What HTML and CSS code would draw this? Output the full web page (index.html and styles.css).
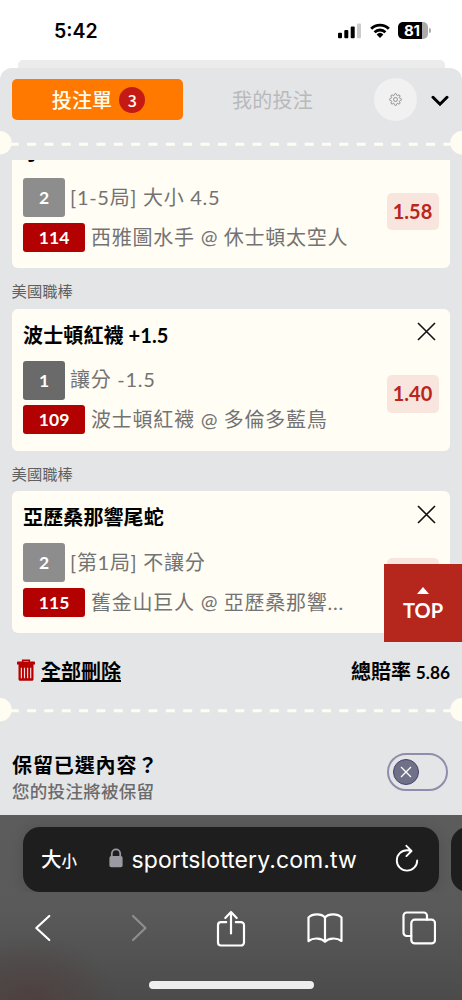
FILE: index.html
```
<!DOCTYPE html>
<html lang="zh-Hant">
<head>
<meta charset="utf-8">
<title>投注單</title>
<link rel="stylesheet" href="styles.css">
</head>
<body>
<div class="phone">
  <header class="status">
    <span class="clock">5:42</span>
    <div class="status-icons">
      <svg class="signal" width="24" height="16" viewBox="0 0 24 16"><rect x="0" y="9.7" width="4" height="5.6" rx="1"/><rect x="6.3" y="7" width="4" height="8.3" rx="1"/><rect x="12.7" y="3.4" width="4" height="11.9" rx="1"/><rect x="19" y="0.5" width="4" height="14.8" rx="1" fill="#cbcbcb"/></svg>
      <svg class="wifi" width="20" height="16" viewBox="0 0 20 16"><path d="M1.2 5.7a12.6 12.6 0 0 1 17.6 0M4.6 9.2a7.8 7.8 0 0 1 10.8 0" fill="none" stroke="#000" stroke-width="2.9"/><path d="M6.6 11.4a5 5 0 0 1 6.8 0L10 15z"/></svg>
      <div class="battery"><span>81</span></div>
      <i class="battery-cap"></i>
    </div>
  </header>
  <div class="sheet-back"></div>
  <main class="sheet">
    <nav class="tabs">
      <div class="tab active">投注單<span class="count">3</span></div>
      <div class="tab idle">我的投注</div>
      <div class="gear"><svg width="13" height="13" viewBox="0 0 24 24" fill="none" stroke="#858585" stroke-width="1.7"><circle cx="12" cy="12" r="3.6"/><path d="M19.400 15a1.650 1.650 0 0 0 .33 1.820l.06.06a2 2 0 0 1-2.830 2.830l-.06-.06a1.650 1.650 0 0 0-2.800 1.170V21a2 2 0 0 1-4 0v-.09a1.650 1.650 0 0 0-2.900-1.200l-.06.06a2 2 0 0 1-2.830-2.830l.06-.06A1.650 1.650 0 0 0 3.090 14H3a2 2 0 0 1 0-4h.09a1.650 1.650 0 0 0 1.200-2.900l-.06-.06a2 2 0 0 1 2.830-2.830l.06.06A1.650 1.650 0 0 0 10 3.090V3a2 2 0 0 1 4 0v.09a1.650 1.650 0 0 0 2.820 1.180l.06-.06a2 2 0 0 1 2.830 2.830l-.06.06A1.650 1.650 0 0 0 20.910 10H21a2 2 0 0 1 0 4h-.09a1.650 1.650 0 0 0-1.510 1z"/></svg></div>
      <svg class="chevron" width="18" height="12" viewBox="0 0 18 12"><path d="M2 2.3l7 6.9 7-6.9" fill="none" stroke="#000" stroke-width="3" stroke-linecap="round"/></svg>
    </nav>
    <svg class="tear" width="462" height="24" viewBox="0 0 462 24"><path d="M9.7 13.300H452" stroke="#fffdf2" stroke-width="3" stroke-dasharray="9 8.35"/><circle cx="0" cy="11.7" r="11.7"/><circle cx="462" cy="11.7" r="11.7"/></svg>
    <section class="bets">
      <article class="card">
        <div class="info">
          <h2>小 4.5</h2>
          <div class="line"><b class="pick gray">2</b><span>[1-5局] 大小 4.5</span></div>
          <div class="line game"><b class="code">114</b><span>西雅圖水手 <i class="at">@</i> 休士頓太空人</span></div>
        </div>
        <div class="side"><svg class="close" width="19" height="19" viewBox="0 0 19 19"><path d="M1 1l17 17M18 1L1 18"/></svg><b class="odds">1.58</b></div>
      </article>
      <div class="league">美國職棒</div>
      <article class="card">
        <div class="info">
          <h2>波士頓紅襪 +1.5</h2>
          <div class="line"><b class="pick">1</b><span>讓分 -1.5</span></div>
          <div class="line game"><b class="code">109</b><span>波士頓紅襪 <i class="at">@</i> 多倫多藍鳥</span></div>
        </div>
        <div class="side"><svg class="close" width="19" height="19" viewBox="0 0 19 19"><path d="M1 1l17 17M18 1L1 18"/></svg><b class="odds">1.40</b></div>
      </article>
      <div class="league">美國職棒</div>
      <article class="card">
        <div class="info">
          <h2>亞歷桑那響尾蛇</h2>
          <div class="line"><b class="pick gray">2</b><span>[第1局] 不讓分</span></div>
          <div class="line game"><b class="code">115</b><span>舊金山巨人 <i class="at">@</i> 亞歷桑那響...</span></div>
        </div>
        <div class="side"><svg class="close" width="19" height="19" viewBox="0 0 19 19"><path d="M1 1l17 17M18 1L1 18"/></svg><b class="odds">&nbsp;</b></div>
      </article>
    </section>
    <div class="summary">
      <div class="clear"><svg width="18" height="22" viewBox="0 0 18 22"><path d="M5.7 3V1.2h6.6V3" fill="none" stroke="#b80000" stroke-width="1.6"/><path d="M.8 2.6h16.4c.5 0 .8.4.8.8V5.6H0V3.4c0-.4.3-.8.8-.8zM1.5 5.6h15v14.600c0 .9-.6 1.5-1.5 1.5H3c-.9 0-1.5-.6-1.5-1.5z" fill="#b80000"/><path d="M4.4 8.7v10.5M7.5 8.7v10.5M10.6 8.7v10.5M13.7 8.7v10.5" stroke="#f4dcdc" stroke-width="1.2"/></svg><u>全部刪除</u></div>
      <div class="total">總賠率 <span>5.86</span></div>
    </div>
    <svg class="tear" width="462" height="24" viewBox="0 0 462 24"><path d="M9.7 12.800H452" stroke="#fffdf2" stroke-width="3" stroke-dasharray="9 8.35"/><circle cx="0" cy="11.7" r="11.7"/><circle cx="462" cy="11.7" r="11.7"/></svg>
    <section class="keep">
      <div><h3>保留已選內容？</h3><p>您的投注將被保留</p></div>
      <div class="switch"><div class="knob"><svg width="12" height="12" viewBox="0 0 12 12"><path d="M1 1l10 10M11 1L1 11" stroke="#fff" stroke-width="1.3"/></svg></div></div>
    </section>
  </main>
  <a class="top"><svg width="12" height="7" viewBox="0 0 12 7"><path d="M6 0l6 7H0z" fill="#fff"/></svg>TOP</a>
  <footer class="browser">
    <div class="address-row">
      <div class="address">
        <div class="size"><span>大</span><small>小</small></div>
        <svg class="lock" width="14" height="20" viewBox="0 0 14 20"><path d="M2.8 9V5.6a4.2 4.2 0 0 1 8.4 0V9" fill="none" stroke="#9b9aa2" stroke-width="1.7"/><rect x=".4" y="8" width="13.2" height="11.2" rx="2" fill="#9b9aa2"/></svg>
        <span class="url">sportslottery.com.tw</span>
        <svg class="reload" width="24" height="28" viewBox="0 0 24 28"><path d="M16.300 7.100Q14.200 6.200 12 6.200A10.200 10.200 0 1 0 22.200 16.400M11.400 1.800l5.100 5.200-5.100 5.100" fill="none" stroke="#fff" stroke-width="1.9" stroke-linecap="round" stroke-linejoin="round"/></svg>
      </div>
      <div class="next-tab"></div>
    </div>
    <div class="tools">
      <svg width="18" height="28" viewBox="0 0 18 28"><path d="M15.3 2L2.3 14l13 12"/></svg>
      <svg class="dim" width="18" height="28" viewBox="0 0 18 28"><path d="M2 2l12.5 12L2 26"/></svg>
      <svg width="30" height="38" viewBox="0 0 30 38"><path d="M10.2 13.2H5a3 3 0 0 0-3 3v17.3a3 3 0 0 0 3 3h20a3 3 0 0 0 3-3V16.2a3 3 0 0 0-3-3h-5.200M15 24.500V3M9.300 9L15 3l5.700 6"/></svg>
      <svg width="36" height="30" viewBox="0 0 36 30"><path d="M18 4.500v24.300C14.500 24.900 6.500 24.300 1.500 28V4.500C5.500.4 14.500.4 18 4.500c3.500-4.100 12.500-4.100 16.500 0V28C29.500 24.300 21.500 24.900 18 28.800"/></svg>
      <svg width="34" height="34" viewBox="0 0 34 34"><rect x="9.300" y="8.700" width="23.700" height="23.700" rx="3.500"/><path d="M9.300 25H4.700A3.200 3.200 0 0 1 1.500 21.800V4.700a3.200 3.200 0 0 1 3.200-3.200h17.100A3.200 3.200 0 0 1 25 4.700v4"/></svg>
    </div>
    <div class="home-bar"></div>
  </footer>
</div>
</body>
</html>
```
FILE: styles.css
```
* { box-sizing: border-box; }
body { margin: 0; background: #fff; font-family: Lato, "Noto Sans CJK TC", sans-serif; }
h2, h3, p { margin: 0; }
svg { display: block; flex: none; }
.phone { position: relative; width: 462px; height: 1000px; overflow: hidden; display: flex; flex-direction: column; }

.status { height: 60px; flex: none; display: flex; justify-content: space-between; padding: 0 31px 0 54px; font-family: Inter, sans-serif; }
.clock { font-size: 19.5px; font-weight: 600; line-height: 24px; margin-top: 19px; }
.status-icons { display: flex; align-items: center; height: 16px; margin-top: 22.500px; }
.wifi { margin-left: 8px; margin-right: 8px; }
.battery { width: 30px; height: 17px; border-radius: 5px; background: linear-gradient(90deg, #000 24.500px, #aaa 24.500px); color: #fff; font-size: 15px; font-weight: 700; line-height: 17px; padding-left: 6px; letter-spacing: -.3px; }
.battery-cap { width: 2px; height: 5px; margin-left: 1px; border-radius: 0 3px 3px 0; background: #aaa; }

.sheet-back { height: 8px; flex: none; margin: 0 17.500px; background: #ececec; border-radius: 5px 5px 0 0; }
.sheet { height: 747px; flex: none; background: #e4e5e7; border-radius: 12px 12px 0 0; overflow: hidden; display: flex; flex-direction: column; }
.tabs { height: 63px; flex: none; display: flex; align-items: center; padding: 0 13px 0 11.500px; }
.tab { width: 171px; height: 40.500px; font-size: 20px; display: flex; align-items: center; justify-content: center; letter-spacing: .2px; }
.active { background: #ff7900; border-radius: 5px; color: #fffdf2; font-weight: 500; padding-left: 3px; }
.idle { width: 180px; color: #b8b9bb; font-weight: 400; letter-spacing: .3px; }
.count { width: 26px; height: 26px; margin-left: 7px; border-radius: 50%; background: #c41a13; font-size: 16px; line-height: 26px; text-align: center; font-family: "Noto Sans CJK TC", sans-serif; font-weight: 500; }
.gear { width: 43.500px; height: 43.500px; margin-left: 11px; border-radius: 50%; background: #f1f1f2; display: flex; align-items: center; justify-content: center; }
.chevron { margin-left: 14px; margin-top: 3px; }
.tear { fill: #fffdf2; }

.bets { height: 473px; flex: none; margin: 5px 12px 0 11.600px; overflow: hidden; display: flex; flex-direction: column; justify-content: flex-end; }
.card { height: 142px; flex: none; background: #fffdf4; border-radius: 6px; padding: 12px 11.500px 12px 11.500px; display: flex; justify-content: space-between; }
.league { height: 40.300px; flex: none; padding-top: 12px; font-size: 15.300px; line-height: 22px; color: #606060; }
.info h2 { font-size: 20px; font-weight: 700; line-height: 28px; letter-spacing: .1px; white-space: nowrap; }
.line { display: flex; align-items: center; height: 39px; margin-top: 12px; font-size: 20px; letter-spacing: .8px; color: #737373; white-space: nowrap; }
.line span { line-height: 28px; font-weight: 400; margin-top: -2px; letter-spacing: .7px; }
.game { height: 29px; margin-top: 5.500px; }
.game span { letter-spacing: .75px; margin-top: -1px; }
.at { font-style: normal; position: relative; top: -.5px; letter-spacing: .4px; }
.pick, .code { color: #fff; text-align: center; font-size: 17.500px; font-weight: 700; letter-spacing: .1px; border-radius: 3px; }
.pick { width: 42px; height: 39px; line-height: 40px; margin-right: 5px; background: #6a6a6a; }
.gray { background: #8d8d8d; }
.code { width: 62px; height: 29px; line-height: 29px; margin-right: 6px; background: #b30000; }
.side { width: 52px; display: flex; flex-direction: column; }
.close { margin: 1.500px 3px 0 auto; stroke: #111; stroke-width: 1.600; fill: none; }
.odds { height: 37.500px; margin-top: 34px; border-radius: 5px; background: #f8e5de; color: #b9271c; font-size: 20px; line-height: 37px; text-align: center; }

.summary { height: 65px; flex: none; display: flex; align-items: center; justify-content: space-between; padding: 9px 12px 0 17px; font-size: 20px; font-weight: 700; }
.clear { display: flex; align-items: center; gap: 6px; }
.clear u { text-decoration-thickness: 1.500px; text-underline-offset: 1px; text-decoration-skip-ink: none; }
.total span { font-size: 17.300px; }
.keep { flex: 1; display: flex; justify-content: space-between; padding: 29px 14px 0 12px; }
.keep h3 { font-size: 20px; line-height: 28px; letter-spacing: .9px; font-weight: 700; }
.keep p { font-size: 17.500px; line-height: 26px; color: #6b6b6b; letter-spacing: .3px; font-weight: 500; }
.switch { width: 61px; height: 38px; margin-top: 2px; border: 2px solid #8f8dab; border-radius: 19px; padding: 4px; }
.knob { width: 26px; height: 26px; border-radius: 50%; background: #707089; border: 1.500px solid #45436b; display: flex; align-items: center; justify-content: center; }
.top { position: absolute; left: 384px; top: 564px; width: 78px; height: 78px; background: #b5261c; color: #fff; font-size: 20px; font-weight: 700; line-height: 24px; display: flex; flex-direction: column; align-items: center; padding-top: 23px; gap: 4px; }

.browser { height: 185px; flex: none; background: radial-gradient(ellipse 90px 70px at 30px 190px, #4e403f, transparent), linear-gradient(#5c5c5c, #5a5a5a 50%, #4b4b4b); font-family: Inter, "Noto Sans CJK TC", sans-serif; color: #fff; }
.address-row { display: flex; gap: 12px; padding: 11.500px 0 0 23px; overflow: hidden; }
.address { width: 416px; height: 65px; flex: none; border-radius: 17px; background: #1e1e1e; box-shadow: 0 1px 14px rgba(0,0,0,.13); display: flex; align-items: center; padding: 0 20px 0 18px; }
.next-tab { width: 60px; height: 65px; flex: none; border-radius: 17px; background: #1e1e1e; }
.size { display: flex; align-items: baseline; font-weight: 500; font-size: 20.500px; width: 67px; line-height: 28px; padding-top: 3px; }
.size small { font-size: 15.500px; }
.lock { margin-right: 9px; margin-left: .5px; margin-top: -2px; }
.url { font-size: 23px; line-height: 30px; letter-spacing: .1px; white-space: nowrap; margin-top: 1px; }
.reload { margin-left: auto; margin-top: -3px; }
.tools { width: 470px; height: 72px; margin-left: -4px; display: grid; grid-template-columns: repeat(5, 94px); align-items: center; justify-items: center; }
.tools svg { fill: none; stroke: #fff; stroke-width: 2.200; stroke-linecap: round; stroke-linejoin: round; }
.tools .dim { stroke: #8e8e8e; margin-left: 5px; }
.home-bar { width: 165px; height: 8px; margin: 17.500px auto 0; border-radius: 4px; background: #eee; }
```
